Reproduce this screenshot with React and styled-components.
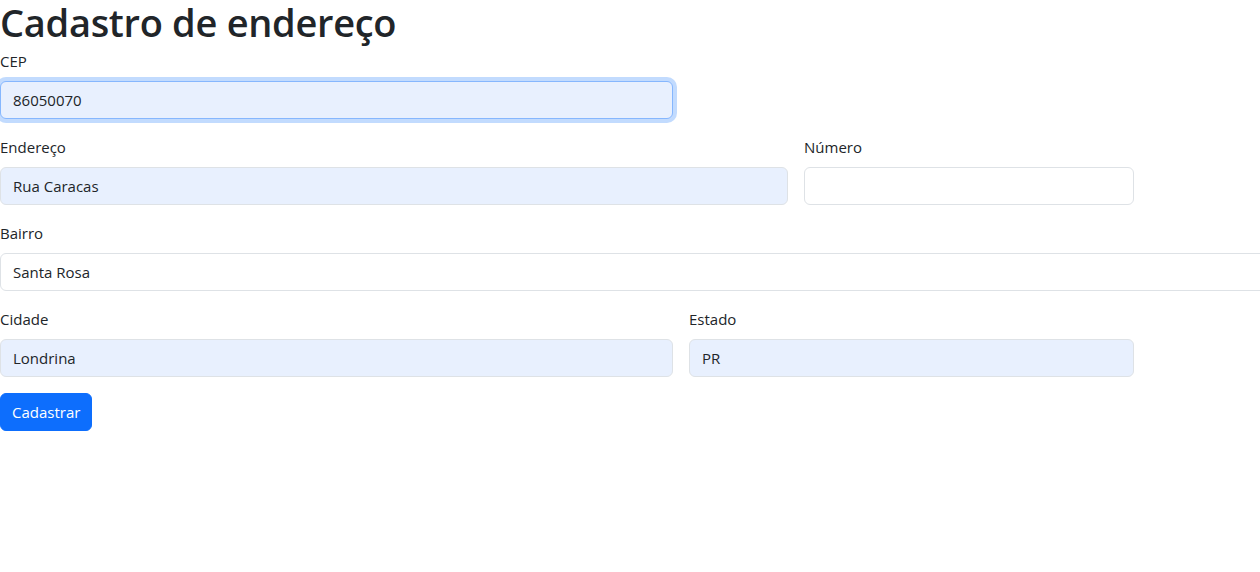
import React, { useState } from "react";
import styled, { createGlobalStyle } from "styled-components";

const GlobalStyle = createGlobalStyle`
  * {
    box-sizing: border-box;
  }
  body {
    margin: 0;
    background: #fff;
    color: #212529;
    font-family: "Open Sans", "Noto Sans", sans-serif;
    font-size: 15px;
    line-height: 1.5;
    overflow: hidden;
  }
`;

export default function App() {
  const [form, setForm] = useState({
    cep: "86050070",
    endereco: "Rua Caracas",
    numero: "",
    bairro: "Santa Rosa",
    cidade: "Londrina",
    estado: "PR",
  });

  const handleChange = (e) => {
    setForm({ ...form, [e.target.name]: e.target.value });
  };

  return (
    <Page>
      <GlobalStyle />
      <Title>Cadastro de endereço</Title>
      <Form onSubmit={(e) => e.preventDefault()}>
        <Row $cols="673px">
          <Field>
            <Label htmlFor="cep">CEP</Label>
            <Input id="cep" name="cep" value={form.cep} onChange={handleChange} $filled $focused />
          </Field>
        </Row>

        <Row $cols="788px 330px">
          <Field>
            <Label htmlFor="endereco">Endereço</Label>
            <Input id="endereco" name="endereco" value={form.endereco} onChange={handleChange} $filled />
          </Field>
          <Field>
            <Label htmlFor="numero">Número</Label>
            <Input id="numero" name="numero" value={form.numero} onChange={handleChange} />
          </Field>
        </Row>

        <Row $cols="1290px">
          <Field>
            <Label htmlFor="bairro">Bairro</Label>
            <Input id="bairro" name="bairro" value={form.bairro} onChange={handleChange} />
          </Field>
        </Row>

        <Row $cols="673px 445px">
          <Field>
            <Label htmlFor="cidade">Cidade</Label>
            <Input id="cidade" name="cidade" value={form.cidade} onChange={handleChange} $filled />
          </Field>
          <Field>
            <Label htmlFor="estado">Estado</Label>
            <Input id="estado" name="estado" value={form.estado} onChange={handleChange} $filled />
          </Field>
        </Row>

        <SubmitButton type="submit">Cadastrar</SubmitButton>
      </Form>
    </Page>
  );
}

const Page = styled.div`
  width: 1260px;
  overflow: hidden;
`;

const Title = styled.h1`
  margin: 0 0 5px;
  font-size: 38px;
  font-weight: 600;
  line-height: 44px;
  letter-spacing: -0.3px;
  color: #212529;
`;

const Form = styled.form`
  display: flex;
  flex-direction: column;
  gap: 16px;
`;

const Row = styled.div`
  display: grid;
  grid-template-columns: ${(p) => p.$cols};
  gap: 16px;
`;

const Field = styled.div`
  display: flex;
  flex-direction: column;
`;

const Label = styled.label`
  display: block;
  margin-bottom: 8px;
  font-size: 15px;
  line-height: 24px;
  color: #212529;
`;

const Input = styled.input`
  display: block;
  width: 100%;
  height: 38px;
  padding: 6px 12px;
  font-family: inherit;
  font-size: 15px;
  line-height: 24px;
  color: #212529;
  background: ${(p) => (p.$filled ? "#e8f0fe" : "#fff")};
  border: 1px solid ${(p) => (p.$focused ? "#86b7fe" : "#dee2e6")};
  border-radius: 6px;
  box-shadow: ${(p) => (p.$focused ? "0 0 0 4px rgba(13, 110, 253, 0.25)" : "none")};
  outline: none;
`;

const SubmitButton = styled.button`
  align-self: flex-start;
  height: 38px;
  padding: 6px 11px;
  font-family: inherit;
  font-size: 15px;
  line-height: 24px;
  color: #fff;
  background: #0d6efd;
  border: 1px solid #0d6efd;
  border-radius: 6px;
  cursor: pointer;
`;
